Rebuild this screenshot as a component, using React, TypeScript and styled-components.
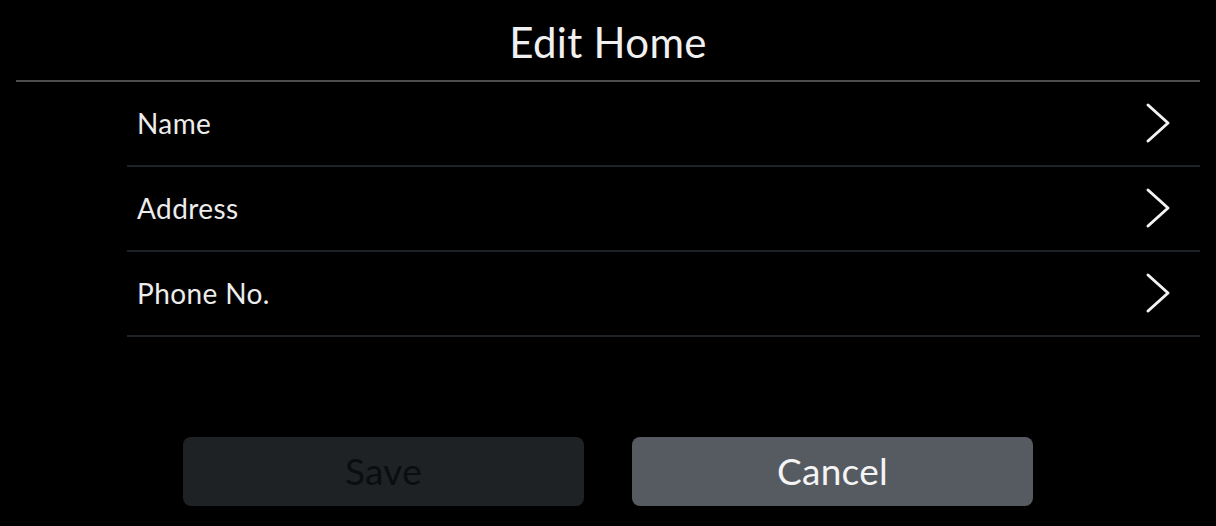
import React from 'react';
import styled, { createGlobalStyle } from 'styled-components';

const GlobalStyle = createGlobalStyle`
    html, body {
        margin: 0;
        padding: 0;
        background: #000;
    }
    body {
        font-family: Lato, "Open Sans", sans-serif;
        color: #f2f2f2;
    }
`;

const Screen = styled.div`
    width: 1216px;
    height: 526px;
    background: #000;
    display: flex;
    flex-direction: column;
`;

const Header = styled.header`
    height: 82px;
    margin: 0 16px;
    border-bottom: 2px solid #4d4d4d;
    display: flex;
    align-items: center;
    justify-content: center;
    box-sizing: border-box;
    padding-top: 4px;
`;

const Title = styled.h1`
    margin: 0;
    font-size: 42px;
    font-weight: 400;
    letter-spacing: 0.3px;
    color: #f0f0f0;
`;

const List = styled.ul`
    list-style: none;
    margin: 0 16px 0 127px;
    padding: 0;
`;

const Row = styled.li`
    height: 85px;
    box-sizing: border-box;
    border-bottom: 2px solid #1d2326;
    display: flex;
    align-items: center;
    justify-content: space-between;
    padding: 0 29px 2px 10px;
    cursor: pointer;
`;

const Label = styled.span`
    font-size: 28px;
    letter-spacing: 0.4px;
    color: #ececec;
`;

const Chevron = () => (
    <svg width="26" height="42" viewBox="0 0 26 42" fill="none">
        <path d="M3 3 L23 21 L3 39" stroke="#f2f2f2" strokeWidth="3" strokeLinecap="round" strokeLinejoin="round" />
    </svg>
);

const Footer = styled.div`
    margin-top: 100px;
    display: flex;
    justify-content: center;
    gap: 48px;
`;

const Button = styled.button<{ $primary?: boolean }>`
    width: 401px;
    height: 69px;
    border: none;
    border-radius: 8px;
    font-family: Lato, "Open Sans", sans-serif;
    font-size: 37px;
    letter-spacing: 0.3px;
    padding: 0 0 2px;
    background: ${({ $primary }) => ($primary ? '#1e2225' : '#565a61')};
    color: ${({ $primary }) => ($primary ? '#0b0d0e' : '#f4f4f4')};

    &:disabled {
        color: #0b0d0e;
        opacity: 1;
    }
`;

const items = ['Name', 'Address', 'Phone No.'];

export default function App() {
    return (
        <Screen>
            <GlobalStyle />
            <Header>
                <Title>Edit Home</Title>
            </Header>
            <List>
                {items.map((item) => (
                    <Row key={item}>
                        <Label>{item}</Label>
                        <Chevron />
                    </Row>
                ))}
            </List>
            <Footer>
                <Button $primary disabled>Save</Button>
                <Button>Cancel</Button>
            </Footer>
        </Screen>
    );
}
